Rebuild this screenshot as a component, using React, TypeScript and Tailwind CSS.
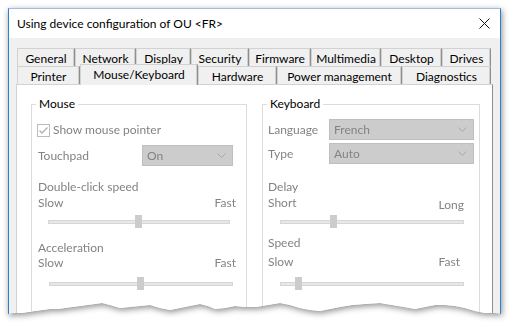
import React from "react";

const tear: [number, number][] = [
  [8, 314], [14, 313], [22, 313], [35, 311], [50, 309], [58, 309], [65, 308], [80, 306], [95, 304], [102, 303],
  [110, 305], [120, 308], [130, 307], [140, 306], [150, 305], [160, 308], [170, 310], [180, 308],
  [190, 306], [200, 304], [208, 306], [215, 309], [225, 308], [235, 306], [245, 307], [256, 307],
  [268, 305], [280, 303], [290, 305], [300, 308], [310, 310], [320, 311], [330, 309], [340, 307],
  [352, 305], [365, 304], [380, 303], [392, 305], [404, 307], [415, 309], [425, 307], [435, 305],
  [445, 305], [455, 306], [465, 308], [475, 311], [485, 313], [495, 313], [501, 314],
];

const clip = `polygon(0px 0px, 493px 0px, ${tear
  .slice()
  .reverse()
  .map(([x, y]) => `${x - 8}px ${y - 8}px`)
  .join(", ")})`;

const row1: [string, number][] = [
  ["General", 58],
  ["Network", 61],
  ["Display", 55],
  ["Security", 58],
  ["Firmware", 62],
  ["Multimedia", 70],
  ["Desktop", 61],
  ["Drives", 49],
];

const row2: [string, number, boolean][] = [
  ["Printer", 63, false],
  ["Mouse/Keyboard", 118, true],
  ["Hardware", 79, false],
  ["Power management", 125, false],
  ["Diagnostics", 89, false],
];

function Chevron() {
  return (
    <svg width="9" height="5" viewBox="0 0 9 5" className="shrink-0">
      <path d="M0.5 0.5 L4.5 4.5 L8.5 0.5" fill="none" stroke="#a8a8a8" strokeWidth="1" />
    </svg>
  );
}

function Select({ value, w }: { value: string; w: number }) {
  return (
    <div
      className="h-[21px] flex items-center justify-between bg-[#cccccc] border border-[#bfbfbf] pl-[4px] pr-[6px] text-[#838383]"
      style={{ width: w }}
    >
      <span>{value}</span>
      <Chevron />
    </div>
  );
}

function Slider({ ml, w, pos }: { ml: number; w: number; pos: number }) {
  return (
    <div className="relative h-[13px]" style={{ marginLeft: ml, width: w }}>
      <div className="absolute left-0 right-0 top-[5px] h-[4px] bg-[#e7e7e7] border border-[#d6d6d6]" />
      <div className="absolute top-0 h-[13px] w-[7px] bg-[#cccccc]" style={{ left: pos }} />
    </div>
  );
}

export default function App() {
  return (
    <div className="w-[512px] h-[325px] bg-white overflow-hidden font-['Segoe_UI',Lato,sans-serif] text-[12px] leading-[16px]">
      <div className="pt-[8px] pl-[8px] [filter:drop-shadow(1px_2px_3px_rgba(0,0,0,0.45))]">
        <div
          className="w-[493px] h-[310px] flex flex-col bg-[#f0f0f0] border-x border-t border-x-[#2b7fd4] border-t-[#9fbde0]"
          style={{ clipPath: clip }}
        >
          {/* title bar */}
          <div className="h-[29px] bg-white flex items-center justify-between pl-[8px] pr-[10px] shrink-0">
            <span className="text-black">Using device configuration of OU &lt;FR&gt;</span>
            <svg width="11" height="11" viewBox="0 0 11 11">
              <path d="M0.5 0.5 L10.5 10.5 M10.5 0.5 L0.5 10.5" stroke="#111" strokeWidth="1" />
            </svg>
          </div>

          {/* body */}
          <div className="flex-1 flex flex-col pt-[10px] pl-[7px] pr-[7px]">
            {/* tab row 1 */}
            <div className="flex h-[18px] pl-[1px]">
              {row1.map(([t, w]) => (
                <div
                  key={t}
                  className="h-[18px] flex items-center justify-center pt-[2px] border-l border-t border-r border-l-[#d2d2d2] border-t-[#d2d2d2] border-r-[#8f8f8f] bg-[#f0f0f0] text-black shadow-[inset_-1px_0_0_#cfcfcf]"
                  style={{ width: w }}
                >
                  {t}
                </div>
              ))}
            </div>
            {/* tab row 2 */}
            <div className="flex h-[18px] pl-[1px] relative z-10">
              {row2.map(([t, w, sel]) =>
                sel ? (
                  <div
                    key={t}
                    className="h-[21px] -mt-[2px] flex items-start justify-center pt-[2px] border-l border-t border-r border-l-[#d2d2d2] border-t-[#d2d2d2] border-r-[#8f8f8f] bg-[#f0f0f0] text-black shadow-[inset_-1px_0_0_#cfcfcf]"
                    style={{ width: w }}
                  >
                    {t}
                  </div>
                ) : (
                  <div
                    key={t}
                    className="h-[18px] flex items-center justify-center pt-[2px] border-l border-t border-r border-l-[#d2d2d2] border-t-[#d2d2d2] border-r-[#8f8f8f] bg-[#f0f0f0] text-black shadow-[inset_-1px_0_0_#cfcfcf]"
                    style={{ width: w }}
                  >
                    {t}
                  </div>
                )
              )}
            </div>
            {/* panel */}
            <div className="flex-1 bg-white border-l border-t border-r border-l-[#d2d2d2] border-t-[#d2d2d2] border-r-[#8f8f8f] flex pt-[19px] pl-[14px] pr-[12px] gap-[15px] text-[#838383]">
              {/* Mouse */}
              <div className="relative w-[216px] border border-[#dcdcdc] flex flex-col pl-[6px] pr-[10px] pt-[17px]">
                <span className="absolute -top-[9px] left-[4px] bg-white px-[3px] text-black">Mouse</span>
                <div className="h-[16px] flex items-center">
                  <div className="w-[13px] h-[13px] border border-[#bcbcbc] bg-white flex items-center justify-center -ml-[1px]">
                    <svg width="11" height="11" viewBox="0 0 11 11">
                      <path d="M1.5 5.5 L4 8 L9.5 2.5" fill="none" stroke="#b0b0b0" strokeWidth="1.3" />
                    </svg>
                  </div>
                  <span className="ml-[3px]">Show mouse pointer</span>
                </div>
                <div className="mt-[7px] h-[21px] flex items-center justify-between">
                  <span>Touchpad</span>
                  <div className="mr-[3px]">
                    <Select value="On" w={91} />
                  </div>
                </div>
                <div className="mt-[13px] h-[16px]">Double-click speed</div>
                <div className="h-[16px] flex justify-between">
                  <span>Slow</span>
                  <span>Fast</span>
                </div>
                <div className="mt-[4px]">
                  <Slider ml={10} w={182} pos={87} />
                </div>
                <div className="mt-[13px] h-[14px] leading-[14px]">Acceleration</div>
                <div className="h-[16px] flex justify-between">
                  <span>Slow</span>
                  <span>Fast</span>
                </div>
                <div className="mt-[6px]">
                  <Slider ml={11} w={184} pos={88} />
                </div>
              </div>
              {/* Keyboard */}
              <div className="relative w-[218px] border border-[#dcdcdc] flex flex-col pl-[5px] pr-[5px] pt-[14px]">
                <span className="absolute -top-[9px] left-[4px] bg-white px-[3px] text-black">Keyboard</span>
                <div className="h-[21px] flex items-center justify-between">
                  <span>Language</span>
                  <Select value="French" w={145} />
                </div>
                <div className="mt-[3px] h-[21px] flex items-center justify-between">
                  <span>Type</span>
                  <Select value="Auto" w={145} />
                </div>
                <div className="mt-[15px] h-[16px]">Delay</div>
                <div className="h-[16px] flex justify-between pr-[10px]">
                  <span>Short</span>
                  <span className="mt-[2px]">Long</span>
                </div>
                <div className="mt-[4px]">
                  <Slider ml={12} w={184} pos={50} />
                </div>
                <div className="mt-[7px] h-[16px]">Speed</div>
                <div className="mt-[3px] h-[16px] flex justify-between pr-[14px]">
                  <span>Slow</span>
                  <span>Fast</span>
                </div>
                <div className="mt-[7px]">
                  <Slider ml={12} w={184} pos={15} />
                </div>
              </div>
            </div>
          </div>
        </div>
      </div>
    </div>
  );
}
